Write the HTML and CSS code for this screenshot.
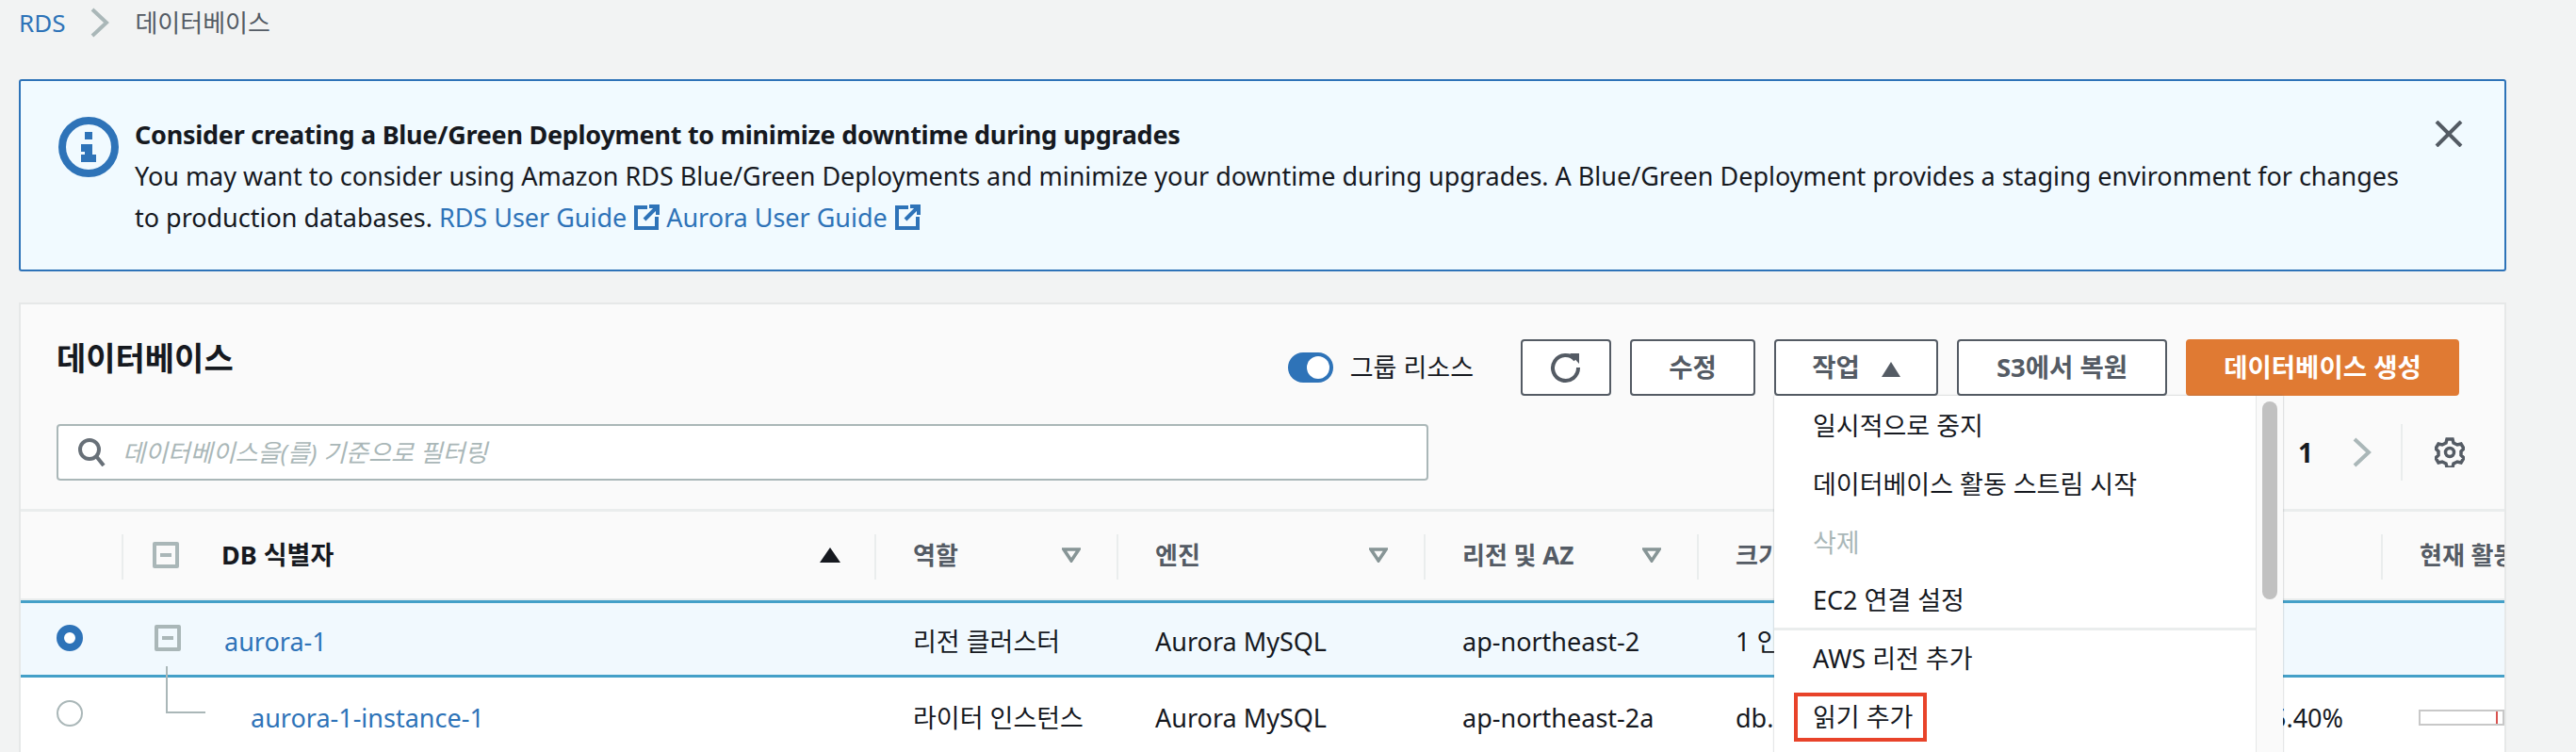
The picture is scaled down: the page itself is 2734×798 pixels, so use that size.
FILE: index.html
```html
<!DOCTYPE html>
<html lang="ko">
<head>
<meta charset="utf-8">
<title>데이터베이스</title>
<link rel="stylesheet" href="styles.css">
</head>
<body>
<nav class="crumbs">
  <a class="link" href="#">RDS</a>
  <svg class="crumb-chev" viewBox="0 0 20 32"><path d="M2 2l15 14L2 30" fill="none" stroke="#aab7b8" stroke-width="4"/></svg>
  <span class="crumb-cur">데이터베이스</span>
</nav>

<section class="alert">
  <svg class="alert-icon" viewBox="0 0 64 64"><circle cx="32" cy="32" r="28" fill="none" stroke="#2e73b8" stroke-width="8"/><path d="M28 16h8v8h-8zM24 29h12v11h4v8H24v-8h4v-3h-4z" fill="#2e73b8"/></svg>
  <div class="alert-body">
    <div class="alert-title">Consider creating a Blue/Green Deployment to minimize downtime during upgrades</div>
    <div class="alert-text">You may want to consider using Amazon RDS Blue/Green Deployments and minimize your downtime during upgrades. A Blue/Green Deployment provides a staging environment for changes<br>to production databases. <a class="link" href="#">RDS User Guide <svg class="ext" viewBox="0 0 28 28"><path d="M15 3H3v22h22V13M17 2h9v9M25 3L12 16" fill="none" stroke="#2e73b8" stroke-width="4"/></svg></a> <a class="link" href="#">Aurora User Guide <svg class="ext" viewBox="0 0 28 28"><path d="M15 3H3v22h22V13M17 2h9v9M25 3L12 16" fill="none" stroke="#2e73b8" stroke-width="4"/></svg></a></div>
  </div>
  <svg class="alert-close" viewBox="0 0 30 28"><path d="M2 1l26 26M28 1L2 27" fill="none" stroke="#545b64" stroke-width="4"/></svg>
</section>

<section class="card">
  <header class="card-head">
    <div class="toolbar">
      <h1 class="title">데이터베이스</h1>
      <div class="actions">
        <span class="toggle"><span class="toggle-knob"></span></span>
        <span class="toggle-label">그룹 리소스</span>
        <button class="btn btn-icon"><svg class="refresh" viewBox="0 0 34 34"><path d="M27 9a13.500 13.500 0 1 0 3 8" fill="none" stroke="#545b64" stroke-width="4"/><path d="M21 2h10v11z" fill="#545b64"/></svg></button>
        <button class="btn btn-edit">수정</button>
        <div class="menu-wrap">
          <button class="btn btn-act">작업 <svg class="caret" viewBox="0 0 20 16"><path d="M10 0l10 16H0z" fill="#545b64"/></svg></button>
          <div class="menu">
            <ul class="menu-list">
              <li class="menu-item">일시적으로 중지</li>
              <li class="menu-item">데이터베이스 활동 스트림 시작</li>
              <li class="menu-item is-off">삭제</li>
              <li class="menu-item is-last">EC2 연결 설정</li>
              <li class="menu-item">AWS 리전 추가</li>
              <li class="menu-item"><span class="mark">읽기 추가</span></li>
            </ul>
            <div class="menu-track"><span class="menu-thumb"></span></div>
          </div>
        </div>
        <button class="btn btn-s3">S3에서 복원</button>
        <button class="btn btn-primary">데이터베이스 생성</button>
      </div>
    </div>
    <div class="filter-row">
      <div class="search">
        <svg class="search-icon" viewBox="0 0 30 30"><circle cx="13" cy="12" r="10" fill="none" stroke="#687078" stroke-width="4"/><path d="M20 19l8 10" stroke="#687078" stroke-width="4"/></svg>
        <span class="placeholder">데이터베이스을(를) 기준으로 필터링</span>
      </div>
      <div class="pager">
        <span class="page-num">1</span>
        <svg class="pager-chev" viewBox="0 0 20 32"><path d="M2 2l15 14L2 30" fill="none" stroke="#aab7b8" stroke-width="4"/></svg>
        <span class="pager-sep"></span>
        <svg class="gear" viewBox="0 0 32 32"><path d="M13 2h6l1 4 4 2 4-1 3 5-3 3v4l3 3-3 5-4-1-4 2-1 4h-6l-1-4-4-2-4 1-3-5 3-3v-4L1 12l3-5 4 1 4-2z" fill="none" stroke="#545b64" stroke-width="3.500"/><circle cx="16" cy="16" r="4.500" fill="none" stroke="#545b64" stroke-width="3.500"/></svg>
      </div>
    </div>
  </header>

  <div class="table">
    <div class="row row-head">
      <div class="cell c-radio"></div>
      <div class="cell c-id th"><span class="tree tree-head"><i></i></span><span class="th-name">DB 식별자</span><svg class="sort" viewBox="0 0 22 16"><path d="M11 0l11 16H0z" fill="#16191f"/></svg></div>
      <div class="cell c-role th"><span>역할</span><svg class="filter" viewBox="0 0 20 16"><path d="M2 2h16l-8 12z" fill="none" stroke="#879596" stroke-width="3.500"/></svg></div>
      <div class="cell c-engine th"><span>엔진</span><svg class="filter" viewBox="0 0 20 16"><path d="M2 2h16l-8 12z" fill="none" stroke="#879596" stroke-width="3.500"/></svg></div>
      <div class="cell c-region th"><span>리전 및 AZ</span><svg class="filter" viewBox="0 0 20 16"><path d="M2 2h16l-8 12z" fill="none" stroke="#879596" stroke-width="3.500"/></svg></div>
      <div class="cell c-size th"><span>크기</span></div>
      <div class="cell c-now th"><span>현재 활동</span></div>
    </div>
    <div class="row row-sel">
      <div class="cell c-radio"><span class="radio radio-on"></span></div>
      <div class="cell c-id"><span class="tree"><i></i></span><a class="link id-link" href="#">aurora-1</a></div>
      <div class="cell c-role">리전 클러스터</div>
      <div class="cell c-engine">Aurora MySQL</div>
      <div class="cell c-region">ap-northeast-2</div>
      <div class="cell c-size">1 인스턴스</div>
      <div class="cell c-now"></div>
    </div>
    <div class="row row-plain">
      <div class="cell c-radio"><span class="radio"></span></div>
      <div class="cell c-id"><span class="branch"></span><a class="link id-link-sub" href="#">aurora-1-instance-1</a></div>
      <div class="cell c-role">라이터 인스턴스</div>
      <div class="cell c-engine">Aurora MySQL</div>
      <div class="cell c-region">ap-northeast-2a</div>
      <div class="cell c-size c-size-pct"><span>db.r5.large</span><span>5.40%</span></div>
      <div class="cell c-now"><span class="meter"><span class="meter-tick"></span></span></div>
    </div>
  </div>
</section>
</body>
</html>
```

FILE: styles.css
```css
* { box-sizing: border-box; }
html, body { height: 100%; }
body {
  margin: 0;
  height: 798px;
  overflow: hidden;
  background: #f2f3f3;
  padding: 0 74px 0 20px;
  color: #16191f;
  font: 400 27px/44px "Noto Sans", "Noto Sans CJK KR", sans-serif;
}
.link { color: #2e73b8; text-decoration: none; }

.crumbs { display: flex; align-items: center; height: 48px; font-size: 26px; }
.crumb-chev { width: 20px; height: 32px; margin: 0 27px; flex: none; }
.crumb-cur { color: #545b64; }

.alert {
  display: flex;
  margin-top: 36px;
  height: 204px;
  padding: 35px 44px 35px 40px;
  background: #f1faff;
  border: 2px solid #2e73b8;
  border-radius: 3px;
}
.alert-icon { width: 64px; height: 64px; flex: none; margin: 3px 17px 0 0; }
.alert-body { flex: 1; min-width: 0; white-space: nowrap; }
.alert-title { font-weight: 700; letter-spacing: -.27px; }
.alert-text { letter-spacing: -.02px; }
.ext { width: 28px; height: 28px; vertical-align: -4px; }
.alert-close { width: 30px; height: 28px; flex: none; margin-top: 7px; }

.card {
  margin-top: 33px;
  height: 480px;
  background: #fafafa;
  border: 2px solid #e6e8e8;
  border-bottom: 0;
  overflow: hidden;
}
.card-head { padding: 37px 48px 30px 38px; }
.toolbar { display: flex; justify-content: space-between; align-items: flex-start; height: 60px; }
.title { margin: 0; font-size: 34px; line-height: 40px; font-weight: 700; }
.actions { display: flex; align-items: center; }
.toggle {
  width: 48px; height: 32px; border-radius: 16px; background: #2e73b8;
  position: relative; margin-right: 18px;
}
.toggle-knob { position: absolute; right: 4px; top: 4px; width: 24px; height: 24px; border-radius: 50%; background: #fff; }
.toggle-label { font-size: 27px; margin-right: 50px; white-space: nowrap; }
.btn {
  height: 60px;
  padding: 0;
  margin-left: 20px;
  background: #fff;
  border: 2px solid #545b64;
  border-radius: 4px;
  color: #545b64;
  font: 700 27.500px/1 "Noto Sans", "Noto Sans CJK KR", sans-serif;
  white-space: nowrap;
}
.btn-icon { width: 96px; margin-left: 0; display: flex; align-items: center; justify-content: center; }
.refresh { width: 34px; height: 34px; }
.btn-edit { width: 133px; }
.btn-act { width: 174px; margin-left: 0; }
.menu-wrap { position: relative; margin-left: 20px; }
.caret { width: 20px; height: 16px; margin-left: 16px; }
.btn-s3 { width: 223px; }
.btn-primary { width: 290px; background: #e07a33; border-color: #e07a33; color: #fff; }

.menu {
  position: absolute;
  z-index: 5;
  top: 60px;
  left: 0;
  width: 540px;
  height: 500px;
  display: flex;
  background: #fff;
  box-shadow: 0 0 2px rgba(84, 91, 100, .45);
}
.menu-list { list-style: none; margin: 0; padding: 1px 0 0; flex: 1; font-size: 27px; }
.menu-item { height: 62px; display: flex; align-items: center; padding-left: 41px; white-space: nowrap; }
.is-off { color: #aab7b8; }
.is-last { border-bottom: 3px solid #eaeded; margin-bottom: -1px; }
.mark { outline: 4px solid #e8432a; padding: 0 11px 0 16px; margin-left: -16px; line-height: 44px; }
.menu-track { width: 29px; background: #fafafa; border-left: 1px solid #e6e8e8; padding: 6px 6px 0 6px; }
.menu-thumb { display: block; height: 210px; border-radius: 8px; background: #c1c1c1; }

.filter-row { display: flex; align-items: center; justify-content: space-between; margin-top: 30px; height: 60px; }
.search {
  width: 1456px;
  height: 60px;
  display: flex;
  align-items: center;
  gap: 18px;
  padding-left: 20px;
  background: #fff;
  border: 2px solid #aab7b8;
  border-radius: 4px;
}
.search-icon { width: 30px; height: 30px; flex: none; }
.placeholder { color: #aab7b8; font-size: 26px; font-style: italic; }
.pager { display: flex; align-items: center; margin-right: -6px; }
.page-num { font-weight: 700; font-size: 28px; margin-right: 42px; }
.pager-chev { width: 20px; height: 32px; }
.pager-sep { width: 2px; height: 60px; background: #eaeded; margin: 0 34px 0 31px; }
.gear { width: 32px; height: 32px; }

.table { border-top: 3px solid #eaeded; }
.row {
  display: grid;
  grid-template-columns: 107px 799px 257px 326px 290px 726px 1fr;
  white-space: nowrap;
}
.cell { display: flex; align-items: center; min-width: 0; overflow: hidden; padding-left: 41px; }
.row-head { height: 95px; border-bottom: 3px solid #eaeded; }
.th { font-weight: 700; color: #545b64; font-size: 26px; position: relative; justify-content: space-between; padding-right: 38px; }
.th::before { content: ""; position: absolute; left: 0; top: 24px; width: 2px; height: 48px; background: #eaeded; }
.th-name { color: #16191f; margin-right: auto; margin-left: 45px; font-size: 27px; }
.c-id.th { padding-left: 33px; padding-right: 36px; }
.sort { width: 22px; height: 16px; }
.filter { width: 20px; height: 16px; }
.row-sel { height: 82px; background: #f1f9fe; border-top: 3px solid #44a0c8; border-bottom: 3px solid #44a0c8; margin-top: -1px; }
.row-sel .cell, .row-plain .cell { padding-top: 5px; }
.row-plain { height: 80px; background: #fff; }
.cell.c-radio { padding: 0 0 0 38px; }
.radio { width: 28px; height: 28px; border-radius: 50%; border: 2px solid #aab7b8; background: #fff; margin-top: -4px; }
.radio-on { border: 8px solid #2e73b8; margin-top: -2px; }
.tree { width: 28px; height: 28px; border: 4px solid #aab7b8; border-radius: 2px; display: flex; align-items: center; justify-content: center; flex: none; }
.tree i { display: block; width: 12px; height: 4px; background: #aab7b8; }
.c-id { position: relative; overflow: visible; }
.row-sel .c-id, .row-plain .c-id { padding-left: 35px; }
.row-sel .tree { margin-top: -8px; position: relative; }
.id-link { margin-left: 46px; }
.branch { position: absolute; left: 47px; top: -12px; width: 42px; height: 50px; border-left: 2px solid #aab7b8; border-bottom: 2px solid #aab7b8; }
.id-link-sub { margin-left: 102px; }
.c-size-pct { justify-content: space-between; padding-right: 40px; }
.meter { display: block; position: relative; width: 100%; height: 17px; border: 2px solid #c8c8c8; background: #fff; }
.meter-tick { position: absolute; left: 80px; top: 0; width: 2px; height: 100%; background: #d9534f; }
.row-plain .c-now { padding-left: 40px; }
```
